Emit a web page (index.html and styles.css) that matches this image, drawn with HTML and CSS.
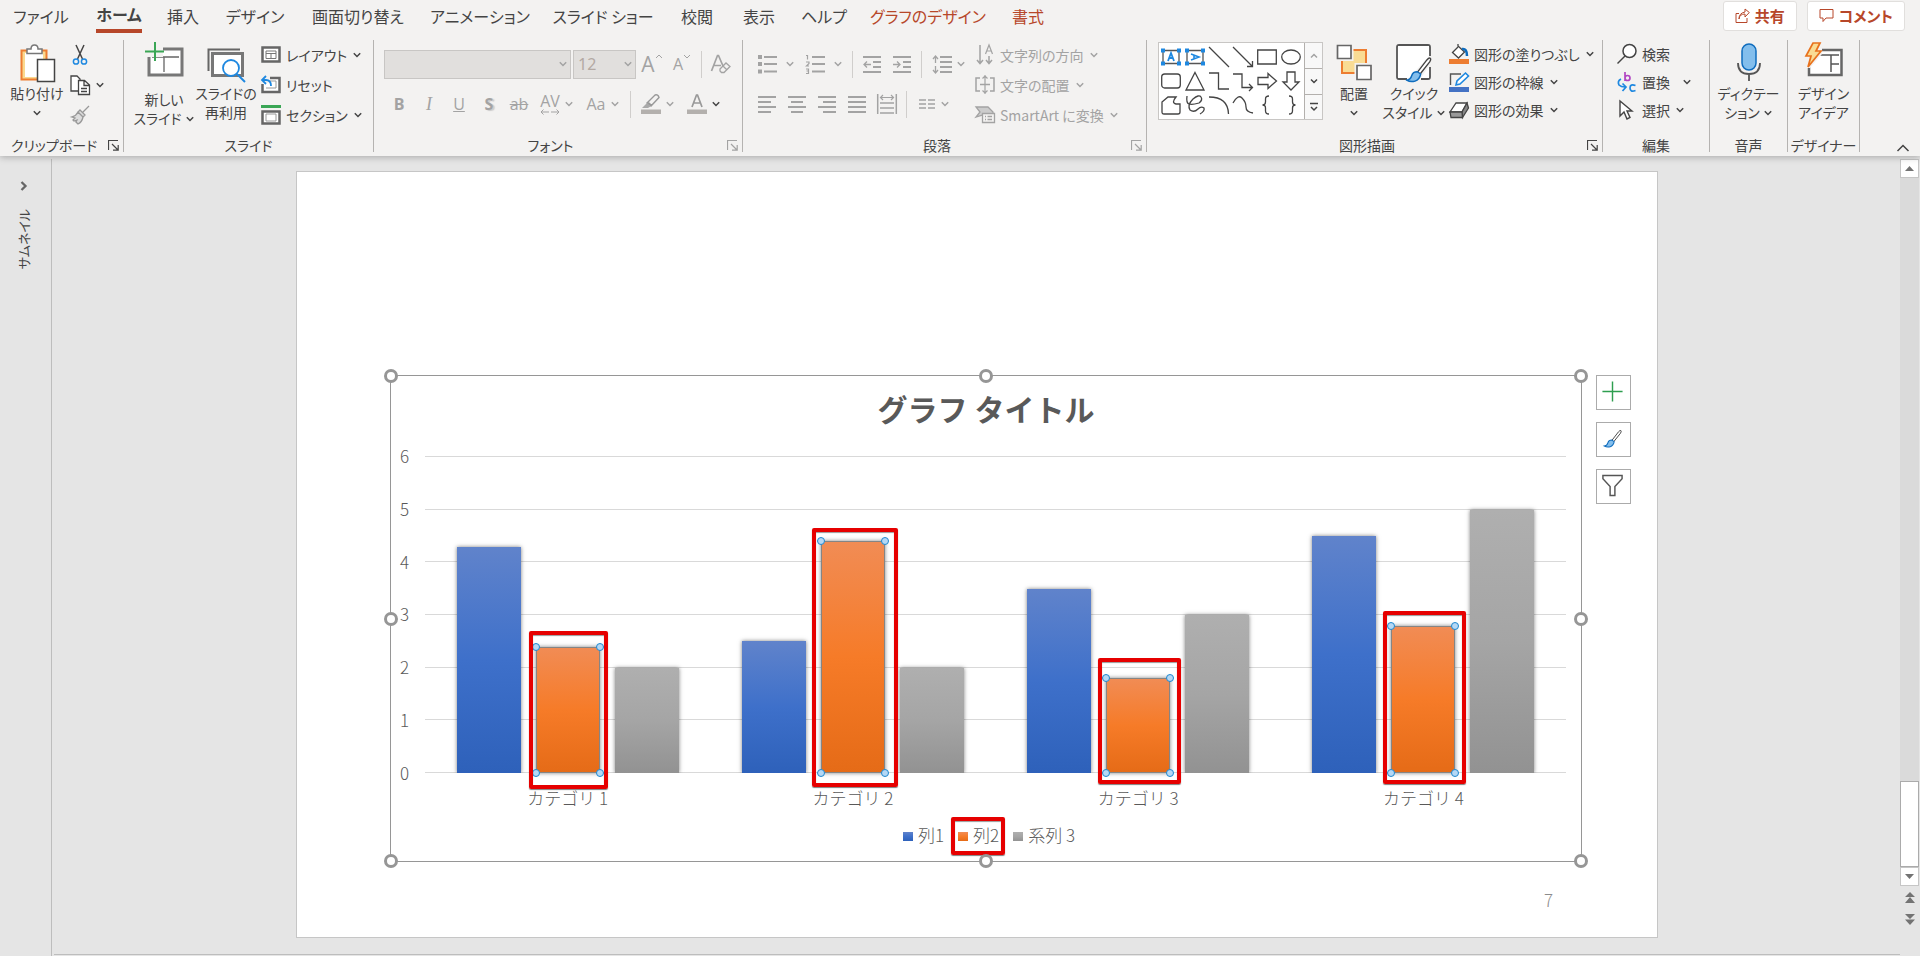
FILE: index.html
```
<!DOCTYPE html>
<html lang="ja">
<head>
<meta charset="utf-8">
<title>プレゼンテーション</title>
<link rel="stylesheet" href="styles.css">
</head>
<body>
<svg class="sprite" aria-hidden="true">
  <symbol id="chev" viewBox="0 0 10 10"><path d="M1.8 3.3 5 6.5 8.2 3.3" fill="none" stroke="currentColor" stroke-width="1.5"/></symbol>
  <symbol id="launch" viewBox="0 0 11 11"><path d="M.5 10V.5H10M4 4l6 6M10.2 5v5.2H5" fill="none" stroke="currentColor" stroke-width="1.2"/></symbol>
  <symbol id="brush" viewBox="0 0 24 24"><path d="M10.5 14.5 19 3.5q2-2.3 3-1.5t-.5 3.300L13 16z" fill="#fff" stroke="#444" stroke-width="1.200"/><path d="M10.500 14q-4 0-5 3.500t-4.500 4q3.500 2 7.500.8t5-6.300z" fill="#83beec" stroke="#0f6cbd" stroke-width="1.300"/></symbol>
</svg>

<header class="ribbon">
  <div class="topbar">
    <nav class="tabs">
      <button>ファイル</button>
      <button class="active"><span>ホーム</span></button>
      <button>挿入</button>
      <button>デザイン</button>
      <button>画面切り替え</button>
      <button>アニメーション</button>
      <button>スライド ショー</button>
      <button>校閲</button>
      <button>表示</button>
      <button>ヘルプ</button>
      <button class="context">グラフのデザイン</button>
      <button class="context">書式</button>
    </nav>
    <div class="actions">
      <button><svg width="15" height="16" viewBox="0 0 15 16" fill="none" stroke="currentColor"><path d="M4 5.500H1v9h11V10M4 11q.5-5 6-5V9l4.300-4.500L10 1v3Q4 5 4 11z"/></svg>共有</button>
      <button><svg width="15" height="16" viewBox="0 0 15 16" fill="none" stroke="currentColor"><path d="M1 1.500h13v8.500H7l-3 3.500V10H1z"/></svg>コメント</button>
    </div>
  </div>

  <div class="groups">
    <section class="group g-clip">
      <div class="body">
        <button class="big">
          <svg class="ic38" viewBox="0 0 38 38"><path d="M3.500 6.500h25v29h-25z" fill="#fad98f" stroke="#ed7d31" stroke-width="2"/><path d="M7 9h18v24H7z" fill="#fff"/><path d="M9 9.500V5h4q0-4 3.500-4T20 5h4v4.500z" fill="#fff" stroke="#777" stroke-width="1.500"/><path d="M19.500 15.500h17v22h-17z" fill="#fff" stroke="#444" stroke-width="1.500"/></svg>
          <span>貼り付け</span><svg class="chev"><use href="#chev"/></svg>
        </button>
        <div class="stack">
          <button class="row" aria-label="切り取り"><svg class="ic20" viewBox="0 0 20 20" fill="none"><path d="M6 0 12.500 14M14 0 7.500 14" stroke="#444" stroke-width="1.500"/><circle cx="6" cy="16.500" r="2.600" stroke="#1e88e0" stroke-width="1.500"/><circle cx="14" cy="16.500" r="2.600" stroke="#1e88e0" stroke-width="1.500"/></svg></button>
          <button class="row" aria-label="コピー"><svg class="ic20" viewBox="0 0 20 20" fill="#fff" stroke="#444" stroke-width="1.300"><path d="M7 16H1V1h6l3 3v12z"/><path d="M8.500 5.500h6l5 4.500v9.500h-11zM14 6v4.500h5M11 13.500h6M11 16.500h6"/></svg><svg class="chev"><use href="#chev"/></svg></button>
          <button class="row" disabled aria-label="書式のコピー"><svg class="ic20" viewBox="0 0 20 20" fill="#ddd" stroke="#999" stroke-width="1.300"><path d="M19 1 13 7M10 5l5 5-2 2-5-5zM8 7l5 5q-1 5-5 7l-2-2 1-2-3 1-1-1 2-2-3-1q4-1 6-5z"/></svg></button>
        </div>
      </div>
      <footer><h2>クリップボード</h2><button aria-label="クリップボードの詳細"><svg><use href="#launch"/></svg></button></footer>
    </section>

    <section class="group g-slide">
      <div class="body">
        <button class="big low w64">
          <svg class="ic38" viewBox="0 0 38 38"><path d="M4 7h33v26H4z" fill="#fff" stroke="#777" stroke-width="3"/><path d="M7 15h27M19 15v15" fill="none" stroke="#666" stroke-width="1.300"/><path d="M0 1h18v14H0z" fill="#f3f2f1"/><path d="M10 0v19M0 9.500h19" stroke="#3aa655" stroke-width="2"/></svg>
          <span>新しい<br>スライド <svg class="chev"><use href="#chev"/></svg></span>
        </button>
        <button class="big w60">
          <svg class="ic38" viewBox="0 0 38 38"><path d="M1.500 27V5.500H33" fill="none" stroke="#666" stroke-width="2"/><path d="M5.500 9.500h30v22h-30z" fill="#fff" stroke="#777" stroke-width="3"/><circle cx="24" cy="24" r="8" fill="#fff" stroke="#1e88e0" stroke-width="1.800"/><path d="m30 30 8 8" stroke="#1e88e0" stroke-width="2"/></svg>
          <span>スライドの<br>再利用</span>
        </button>
        <div class="stack">
          <button class="row"><svg class="ic20" viewBox="0 0 20 20"><path d="M1.500 2.500h17v14h-17z" fill="#fff" stroke="#666" stroke-width="2.500"/><path d="M5 6h10v7.500H5zM5 8.500h10M10 8.500v5" fill="none" stroke="#777"/></svg>レイアウト<svg class="chev"><use href="#chev"/></svg></button>
          <button class="row"><svg class="ic20" viewBox="0 0 20 20"><path d="M3 3h15.500v14H1.500V9" fill="#fff" stroke="#666" stroke-width="2.500"/><path d="M9 6h6v7H5" fill="none" stroke="#999"/><path d="M0 0h9v8H0z" fill="#f3f2f1"/><path d="M5 1 1 5l4 4M1 5h4q5 0 5 6" fill="none" stroke="#1e88e0" stroke-width="1.800"/></svg>リセット</button>
          <button class="row"><svg class="ic20" viewBox="0 0 20 20"><path d="M0 0h20v3H0z" fill="#3aa655"/><path d="M1.500 6.500h17v12h-17z" fill="#fff" stroke="#666" stroke-width="2.500"/><path d="M5 9h10v7H5z" fill="none" stroke="#999"/></svg>セクション<svg class="chev"><use href="#chev"/></svg></button>
        </div>
      </div>
      <footer><h2>スライド</h2></footer>
    </section>

    <section class="group g-font">
      <div class="tools">
        <div class="line">
          <span class="combo name"><select disabled aria-label="フォント"><option></option></select><svg class="chev"><use href="#chev"/></svg></span>
          <span class="combo size"><select disabled aria-label="フォント サイズ"><option>12</option></select><svg class="chev"><use href="#chev"/></svg></span>
          <button class="tool" disabled aria-label="フォント サイズの拡大"><span class="glyph large">A</span><svg class="mini" viewBox="0 0 8 8"><path d="m1 5 3-3 3 3" fill="none" stroke="currentColor"/></svg></button>
          <button class="tool" disabled aria-label="フォント サイズの縮小"><span class="glyph">A</span><svg class="mini" viewBox="0 0 8 8"><path d="m1 2 3 3 3-3" fill="none" stroke="currentColor"/></svg></button>
          <i class="sep"></i>
          <button class="tool" disabled aria-label="書式のクリア"><svg class="ic20" viewBox="0 0 20 20" fill="none" stroke="currentColor" stroke-width="1.300"><path d="M.500 17 6.500 1.500h1L12 12M3 11.500h7" stroke-width="1.700"/><path d="m9 15 6-6 4 3.500-6 6h-2.500L9 17zM12 12l4 4" fill="#f3f2f1"/></svg></button>
        </div>
        <div class="line">
          <button class="tool" disabled><b class="glyph">B</b></button>
          <button class="tool" disabled><i class="glyph serif">I</i></button>
          <button class="tool" disabled><u class="glyph">U</u></button>
          <button class="tool" disabled><b class="glyph shade">S</b></button>
          <button class="tool" disabled><s class="glyph">ab</s></button>
          <button class="tool combo-tool" disabled aria-label="文字の間隔"><span class="glyph av">AV<svg viewBox="0 0 20 6" fill="none" stroke="currentColor"><path d="M1 3h8M11 3h8M3.500.500 1 3l2.500 2.500M16.500.500 19 3l-2.500 2.500"/></svg></span><svg class="chev"><use href="#chev"/></svg></button>
          <button class="tool combo-tool" disabled><span class="glyph">Aa</span><svg class="chev"><use href="#chev"/></svg></button>
          <i class="sep"></i>
          <button class="tool combo-tool" disabled aria-label="蛍光ペンの色"><svg class="ic20" viewBox="0 0 20 20"><path d="M0 15.500h20v4.500H0z" fill="#b3b0ad"/><path d="M6 9 14 1q3-1 4 2.500L10 12zM7 8l4 4" fill="none" stroke="#999" stroke-width="1.400"/><path d="m6 9 3.500 3.500L7 14H1z" fill="#aaa"/></svg><svg class="chev"><use href="#chev"/></svg></button>
          <button class="tool combo-tool" disabled aria-label="フォントの色"><svg class="ic20" viewBox="0 0 20 20"><path d="M0 15.500h20v4.500H0z" fill="#b3b0ad"/><path d="m5 13 4.500-12h1L15 13M6.500 9h7" fill="none" stroke="#999" stroke-width="1.700"/></svg><svg class="chev dark"><use href="#chev"/></svg></button>
        </div>
      </div>
      <footer><h2>フォント</h2><button disabled aria-label="フォントの詳細"><svg><use href="#launch"/></svg></button></footer>
    </section>

    <section class="group g-para">
      <div class="body">
        <div class="tools">
          <div class="line">
            <button class="tool combo-tool wide" disabled aria-label="箇条書き"><svg class="ic20" viewBox="0 0 20 20" stroke="currentColor" stroke-width="1.800"><path d="M7 3h13M7 10h13M7 17.500h13"/><path d="M1 3h4M1 10h4M1 17.500h4" stroke-width="4"/></svg><svg class="chev"><use href="#chev"/></svg></button>
            <button class="tool combo-tool wide" disabled aria-label="段落番号"><svg class="ic20" viewBox="0 0 20 20" stroke="currentColor" fill="none" stroke-width="1.800"><path d="M7 3h13M7 10h13M7 17.500h13"/><path d="M1 1.500h1.500v4M1 8h3v1.500L1.500 12H4M1 15h2.500v4.500H1M1.500 17h2" stroke-width="1.200"/></svg><svg class="chev"><use href="#chev"/></svg></button>
            <i class="sep"></i>
            <button class="tool" disabled aria-label="インデントを減らす"><svg class="ic18" viewBox="0 0 18 18" stroke="currentColor" fill="none" stroke-width="1.800"><path d="M0 2h18M10 7h8M10 12h8M0 17h18"/><path d="M8 9.500H1M4 6.500l-3 3 3 3" stroke-width="1.300"/></svg></button>
            <button class="tool" disabled aria-label="インデントを増やす"><svg class="ic18" viewBox="0 0 18 18" stroke="currentColor" fill="none" stroke-width="1.800"><path d="M0 2h18M10 7h8M10 12h8M0 17h18"/><path d="M0 9.500h7M4 6.500l3 3-3 3" stroke-width="1.300"/></svg></button>
            <i class="sep"></i>
            <button class="tool combo-tool" disabled aria-label="行間"><svg class="ic20" viewBox="0 0 20 20" stroke="currentColor" fill="none" stroke-width="1.800"><path d="M8 3h12M8 8h12M8 13h12M8 18h12"/><path d="M3.500 2v7M3.500 12v7M1 5l2.500-3L6 5M1 16l2.500 3L6 16" stroke-width="1.300"/></svg><svg class="chev"><use href="#chev"/></svg></button>
          </div>
          <div class="line">
            <button class="tool" disabled aria-label="左揃え"><svg class="ic18" viewBox="0 0 18 18" stroke="currentColor" stroke-width="1.800"><path d="M0 2h18M0 7h13M0 12h18M0 17h13"/></svg></button>
            <button class="tool" disabled aria-label="中央揃え"><svg class="ic18" viewBox="0 0 18 18" stroke="currentColor" stroke-width="1.800"><path d="M0 2h18M3 7h12M0 12h18M3 17h12"/></svg></button>
            <button class="tool" disabled aria-label="右揃え"><svg class="ic18" viewBox="0 0 18 18" stroke="currentColor" stroke-width="1.800"><path d="M0 2h18M5 7h13M0 12h18M5 17h13"/></svg></button>
            <button class="tool" disabled aria-label="両端揃え"><svg class="ic18" viewBox="0 0 18 18" stroke="currentColor" stroke-width="1.800"><path d="M0 2h18M0 7h18M0 12h18M0 17h18"/></svg></button>
            <button class="tool" disabled aria-label="均等割り付け"><svg class="ic20" viewBox="0 0 20 20" stroke="currentColor" fill="none" stroke-width="1.500"><path d="M.700 0v20M19.300 0v20M3 9h14M3 14h14M3 19h14"/><path d="M3 3.500h14M6 1 3.500 3.500 6 6M14 1l2.500 2.500L14 6" stroke-width="1.200"/></svg></button>
            <i class="sep"></i>
            <button class="tool combo-tool" disabled aria-label="段の追加または削除"><svg class="ic18" viewBox="0 0 18 18" stroke="currentColor" stroke-width="1.500"><path d="M1 5h7M1 9h7M1 13h7M10 5h7M10 9h7M10 13h7"/></svg><svg class="chev"><use href="#chev"/></svg></button>
          </div>
        </div>
        <div class="stack">
          <button class="row" disabled><svg class="ic20" viewBox="0 0 20 20" fill="none" stroke="currentColor" stroke-width="1.500"><path d="M5 0v18M2 15l3 3.500L8 15M14 11v7M11 15l3 3.500 3-3.500"/><path d="m10.500 9 3.500-9 3.500 9M12 6h4" stroke-width="1.200"/></svg>文字列の方向<svg class="chev"><use href="#chev"/></svg></button>
          <button class="row" disabled><svg class="ic20" viewBox="0 0 20 20" fill="none" stroke="currentColor" stroke-width="1.500"><path d="M5 3H1v13h4M15 3h4v13h-4M5 9.500h10"/><path d="M10 0v19M7.500 3.500 10 1l2.500 2.500M7.500 15.500 10 18l2.500-2.500" stroke-width="1.200"/></svg>文字の配置<svg class="chev"><use href="#chev"/></svg></button>
          <button class="row" disabled><svg class="ic20" viewBox="0 0 20 20" stroke="currentColor" fill="#ccc" stroke-width="1.300"><path d="M1 2h12l5 5v3H8l-7 2 4-5z"/><path d="M7.500 8.500h12v9h-12z" fill="#f3f2f1"/><path d="M10 11.500h1M12.500 11.500H17M10 14.500h1M12.500 14.500H17"/></svg>SmartArt に変換<svg class="chev"><use href="#chev"/></svg></button>
        </div>
      </div>
      <footer><h2>段落</h2><button disabled aria-label="段落の詳細"><svg><use href="#launch"/></svg></button></footer>
    </section>

    <section class="group g-draw">
      <div class="body">
        <div class="gallery">
          <div class="shapes">
            <button aria-label="テキスト ボックス"><svg viewBox="0 0 20 20" fill="none" stroke="#555" stroke-width="1.300"><path d="M2 3.500h16v13H2z"/><path d="m7 14 3-8 3 8M8 11h4" stroke="#1e88e0" stroke-width="1.800"/><path d="M0 3.500h4M16 3.500h4M0 16.500h4M16 16.500h4" stroke="#1e88e0" stroke-width="4"/></svg></button>
            <button aria-label="縦書きテキスト ボックス"><svg viewBox="0 0 20 20" fill="none" stroke="#555" stroke-width="1.300"><path d="M2 3.500h16v13H2z"/><path d="m6 7 8 3-8 3M9 8v4" stroke="#1e88e0" stroke-width="1.600"/><path d="M0 3.500h4M16 3.500h4M0 16.500h4M16 16.500h4" stroke="#1e88e0" stroke-width="4"/></svg></button>
            <button aria-label="線"><svg viewBox="0 0 20 20"><path d="m0 0 20 20"/></svg></button>
            <button aria-label="矢印"><svg viewBox="0 0 20 20"><path d="m0 0 19 19M19.500 14v5.500H14"/></svg></button>
            <button aria-label="四角形"><svg viewBox="0 0 20 20"><path d="M.700 3h18.600v14H.700z"/></svg></button>
            <button aria-label="楕円"><svg viewBox="0 0 20 20"><ellipse cx="10" cy="10" rx="9.300" ry="7"/></svg></button>
            <button aria-label="角丸四角形"><svg viewBox="0 0 20 20"><rect x=".700" y="3" width="18.600" height="14" rx="3"/></svg></button>
            <button aria-label="三角形"><svg viewBox="0 0 20 20"><path d="M10 1.500 19 19H1z"/></svg></button>
            <button aria-label="カギ線コネクタ"><svg viewBox="0 0 20 20"><path d="M0 2h9.500v16H20"/></svg></button>
            <button aria-label="カギ線矢印コネクタ"><svg viewBox="0 0 20 20"><path d="M0 3h9v13.500h10M16 13l3.500 3.500L16 20"/></svg></button>
            <button aria-label="右矢印"><svg viewBox="0 0 20 20"><path d="M1 6.500h10v-4l8.500 7.500-8.500 7.500v-4H1z"/></svg></button>
            <button aria-label="下矢印"><svg viewBox="0 0 20 20"><path d="M6 1h8v10h4L10 19 2 11h4z"/></svg></button>
            <button aria-label="フリーフォーム"><svg viewBox="0 0 20 20"><path d="M1 7 7 2h8q-5 6 0 7h4v8q0 2-2 2H3q-2 0-2-2z"/></svg></button>
            <button aria-label="曲線"><svg viewBox="0 0 20 20"><path d="M2 1q-1 7 2 8t10-1q4-3 2-6T8 4q-6 6-3 11 4 3 8-1 3-3 6-1 1 3-4 6"/></svg></button>
            <button aria-label="円弧"><svg viewBox="0 0 20 20"><path d="M0 2q19 0 19.500 17"/></svg></button>
            <button aria-label="フリーハンド"><svg viewBox="0 0 20 20"><path d="M0 8q5-9 9-5t4 9 7 6"/></svg></button>
            <button aria-label="左中かっこ"><svg viewBox="0 0 20 20"><path d="M12 1Q8.500 1 8.500 4v3q0 3-3 3 3 0 3 3v3q0 3 3.500 3"/></svg></button>
            <button aria-label="右中かっこ"><svg viewBox="0 0 20 20"><path d="M8 1q3.500 0 3.500 3v3q0 3 3 3-3 0-3 3v3q0 3-3.500 3"/></svg></button>
          </div>
          <div class="scroll">
            <button disabled aria-label="上へ"><svg width="10" height="10" viewBox="0 0 10 10"><path d="m2 6.500 3-3 3 3"/></svg></button>
            <button aria-label="下へ"><svg width="10" height="10" viewBox="0 0 10 10"><path d="m2 3.500 3 3 3-3"/></svg></button>
            <button aria-label="その他"><svg width="10" height="10" viewBox="0 0 10 10"><path d="M1 1.500h8M2 5l3 3 3-3"/></svg></button>
          </div>
        </div>
        <button class="big w60">
          <svg class="ic38" viewBox="0 0 38 38"><path d="M7 6h24v23H7z" fill="#f9dc94" stroke="#ed7d31" stroke-width="2"/><path d="M1.500 1h15v14h-15zM21.500 21h15v15h-15z" fill="#fff" stroke="#f3f2f1" stroke-width="4"/><path d="M2.500 1.500h13.500v13H2.500zM22 21.500h14v14H22z" fill="#fff" stroke="#666" stroke-width="1.700"/></svg>
          <span>配置</span><svg class="chev"><use href="#chev"/></svg>
        </button>
        <button class="big w60">
          <svg class="ic38" viewBox="0 0 38 38"><path d="M12 35H4q-2 0-2-2V3q0-2 2-2h29q2 0 2 2v9M35 23v10q0 2-2 2h-7" fill="none" stroke="#555" stroke-width="1.800"/><path d="M3 2h31v10L14 34H3zM34 22v12h-8z" fill="#fff"/><svg x="10" y="12" width="28" height="27" viewBox="0 0 24 24"><use href="#brush"/></svg></svg>
          <span>クイック<br>スタイル <svg class="chev"><use href="#chev"/></svg></span>
        </button>
        <div class="stack tight">
          <button class="row"><svg class="ic20" viewBox="0 0 20 20"><path d="M9 3 3.500 8.500l6 5.500 6-6L9 2V0" fill="#fff" stroke="#444" stroke-width="1.300"/><path d="M13 5q5-1 5 7" stroke="#0f6cbd" stroke-width="2.500" fill="none"/><path d="M0 15h20v5H0z" fill="#ed7d31"/></svg>図形の塗りつぶし<svg class="chev"><use href="#chev"/></svg></button>
          <button class="row"><svg class="ic20" viewBox="0 0 20 20"><path d="M12 2H1.500v11" fill="none" stroke="#555" stroke-width="1.400"/><path d="m7 13 1-4 8.500-8 3 3L11 12z" fill="#fff" stroke="#1e88e0" stroke-width="1.600"/><path d="M0 15h20v5H0z" fill="#4472c4"/></svg>図形の枠線<svg class="chev"><use href="#chev"/></svg></button>
          <button class="row"><svg class="ic20" viewBox="0 0 20 20" stroke="#444" stroke-width="1.300"><path d="m7 3 11 0L13 12H1z" fill="#fff"/><path d="m18 3 1.500 5-6 9.500L13 12z" fill="#888"/><path d="M1 12h12l.500 5.500H2z" fill="#999"/></svg>図形の効果<svg class="chev"><use href="#chev"/></svg></button>
        </div>
      </div>
      <footer><h2>図形描画</h2><button aria-label="図形描画の詳細"><svg><use href="#launch"/></svg></button></footer>
    </section>

    <section class="group g-edit">
      <div class="body">
        <div class="stack tight">
          <button class="row"><svg class="ic20" viewBox="0 0 20 20" fill="#fff" stroke="#444" stroke-width="1.500"><circle cx="12.500" cy="7" r="6.500"/><path d="m8 12-7.500 7.500"/></svg>検索</button>
          <button class="row"><svg class="ic20" viewBox="0 0 20 20" fill="none" stroke-width="1.700"><path d="M8 0v9M8 6q0-2.500 2.500-2.500T13 6t-2.500 2.500T8 6" stroke="#b146c2"/><path d="M18.500 13.500Q13 11.500 13 16t5.500 2.500M4 7Q0 9 2 13q2 2 6 2M5.500 11.500 9 15l-3.500 4" stroke="#1e88e0"/></svg>置換<svg class="chev far"><use href="#chev"/></svg></button>
          <button class="row"><svg class="ic20" viewBox="0 0 20 20" fill="#fff" stroke="#444" stroke-width="1.400"><path d="M3 1v15l4-4 3 7 3-1.500-3-6.500h5z"/></svg>選択<svg class="chev"><use href="#chev"/></svg></button>
        </div>
      </div>
      <footer><h2>編集</h2></footer>
    </section>

    <section class="group g-voice">
      <div class="body">
        <button class="big">
          <svg class="ic38" viewBox="0 0 38 38"><rect x="12" y="0" width="14" height="26" rx="7" fill="#83beec" stroke="#0f6cbd" stroke-width="1.500"/><path d="M8 19q0 11 11 11t11-11M19 30v7" fill="none" stroke="#555" stroke-width="1.800"/></svg>
          <span>ディクテー<br>ション <svg class="chev"><use href="#chev"/></svg></span>
        </button>
      </div>
      <footer><h2>音声</h2></footer>
    </section>

    <section class="group g-idea">
      <div class="body">
        <button class="big">
          <svg class="ic38" viewBox="0 0 38 38"><path d="M4 6h32.500v25H4z" fill="#fff" stroke="#666" stroke-width="2.500"/><path d="M7 11h27M26 11v17M26 20h8" fill="none" stroke="#555" stroke-width="1.500"/><path d="M0-1h17v11L5 24H0z" fill="#f3f2f1"/><path d="M8-1h7l-4 8h5L3 23l3-11H1z" fill="#f9dc94" stroke="#e8711c" stroke-width="1.700"/></svg>
          <span>デザイン<br>アイデア</span>
        </button>
      </div>
      <footer><h2>デザイナー</h2></footer>
    </section>
    <button class="collapse" aria-label="リボンを折りたたむ"><svg width="14" height="10" viewBox="0 0 14 10"><path d="m1.500 8 5.500-5.500L12.500 8" fill="none" stroke="currentColor" stroke-width="1.500"/></svg></button>
  </div>
</header>

<main class="workspace">
  <aside class="rail">
    <button aria-label="サムネイルを展開"><svg width="10" height="12" viewBox="0 0 10 12"><path d="m2.500 2 4 4-4 4" fill="none" stroke="#666" stroke-width="2.300"/></svg></button>
    <span>サムネイル</span>
  </aside>
  <div class="canvas">
    <article class="slide">
      <figure class="chart">
        <h1>グラフ タイトル</h1>
        <div class="plot">
          <div class="axis"><span>6</span><span>5</span><span>4</span><span>3</span><span>2</span><span>1</span><span>0</span></div>
          <div class="area">
            <div class="lines"><i></i><i></i><i></i><i></i><i></i><i></i></div>
            <div class="cats">
              <div class="cat">
                <div class="bar blue" style="height:71.67%"></div>
                <div class="bar orange" style="height:40%"><i class="dot tl"></i><i class="dot tr"></i><i class="dot bl"></i><i class="dot br"></i><i class="mark m1"></i></div>
                <div class="bar gray" style="height:33.33%"></div>
              </div>
              <div class="cat">
                <div class="bar blue" style="height:41.67%"></div>
                <div class="bar orange" style="height:73.33%"><i class="dot tl"></i><i class="dot tr"></i><i class="dot bl"></i><i class="dot br"></i><i class="mark m2"></i></div>
                <div class="bar gray" style="height:33.33%"></div>
              </div>
              <div class="cat">
                <div class="bar blue" style="height:58.33%"></div>
                <div class="bar orange" style="height:30%"><i class="dot tl"></i><i class="dot tr"></i><i class="dot bl"></i><i class="dot br"></i><i class="mark m3"></i></div>
                <div class="bar gray" style="height:50%"></div>
              </div>
              <div class="cat">
                <div class="bar blue" style="height:75%"></div>
                <div class="bar orange" style="height:46.67%"><i class="dot tl"></i><i class="dot tr"></i><i class="dot bl"></i><i class="dot br"></i><i class="mark m4"></i></div>
                <div class="bar gray" style="height:83.33%"></div>
              </div>
            </div>
          </div>
        </div>
        <div class="names"><span>カテゴリ 1</span><span>カテゴリ 2</span><span>カテゴリ 3</span><span>カテゴリ 4</span></div>
        <ul class="legend">
          <li><i class="key blue"></i>列1</li>
          <li class="marked"><i class="key orange"></i>列2<i class="mark m5"></i></li>
          <li><i class="key gray"></i>系列 3</li>
        </ul>
        <i class="handle n w"></i><i class="handle n c"></i><i class="handle n e"></i>
        <i class="handle m w"></i><i class="handle m e"></i>
        <i class="handle s w"></i><i class="handle s c"></i><i class="handle s e"></i>
      </figure>
      <div class="chart-tools">
        <button aria-label="グラフ要素"><svg width="23" height="23" viewBox="0 0 24 24"><path d="M12 1.500v21M1.500 12h21" stroke="#2e9e4f" stroke-width="1.500"/></svg></button>
        <button aria-label="グラフ スタイル"><svg width="22" height="19"><use href="#brush"/></svg></button>
        <button aria-label="グラフ フィルター"><svg width="23" height="23" viewBox="0 0 24 24"><path d="M2 1.500h20v3.500l-7.500 8v9.500h-5V13L2 5z" fill="#fff" stroke="#555" stroke-width="1.500"/></svg></button>
      </div>
      <span class="page-no">7</span>
    </article>
  </div>
  <div class="vscroll">
    <button aria-label="上へスクロール"><svg width="9" height="5" viewBox="0 0 9 5"><path d="M4.500 0 9 5H0z"/></svg></button>
    <div class="track"><div class="thumb"></div></div>
    <button aria-label="下へスクロール"><svg width="9" height="5" viewBox="0 0 9 5"><path d="M0 0h9L4.500 5z"/></svg></button>
    <button class="jump" aria-label="前のスライド"><svg width="10" height="11" viewBox="0 0 10 11"><path d="m5 0 5 5H0zM5 5l5 6H0z"/></svg></button>
    <button class="jump" aria-label="次のスライド"><svg width="10" height="11" viewBox="0 0 10 11"><path d="M0 0h10L5 5zM0 5.500h10L5 11z"/></svg></button>
  </div>
</main>
</body>
</html>
```
FILE: styles.css
```
* { box-sizing: border-box; }
body {
  margin: 0;
  min-height: 100vh;
  display: flex;
  flex-direction: column;
  background: #e5e5e5;
  color: #444;
  font: 14px/18px "Noto Sans CJK JP", "Noto Sans", sans-serif;
}
button {
  margin: 0;
  padding: 0;
  border: 0;
  background: none;
  color: inherit;
  font: inherit;
  font-feature-settings: "palt";
  white-space: nowrap;
}
button:disabled { color: #a3a3a3; }
h1, h2, ul, figure { margin: 0; padding: 0; }
svg { display: block; flex: none; overflow: visible; }
.sprite { position: absolute; width: 0; height: 0; }
.chev { width: 10px; height: 10px; }
.chev.far { margin-left: 7px; }
.chev.dark { color: #444; }
.ic18 { width: 18px; height: 18px; }
.ic20 { width: 20px; height: 20px; }
.ic38 { width: 38px; height: 38px; }

/* Ribbon */
.ribbon {
  position: relative;
  z-index: 1;
  background: #f3f2f1;
  padding-bottom: 4px;
  box-shadow: 0 1px 7px rgba(0, 0, 0, .28);
}
.topbar { display: flex; justify-content: space-between; height: 40px; }
.tabs {
  display: grid;
  grid-template-columns: 78px 78px 50px 94px 112px 132px 114px 74px 50px 80px 128px 72px;
  padding-left: 2px;
  height: 33px;
  font-size: 16px;
}
.tabs button { padding-bottom: 2px; }
.tabs .active { font-weight: 700; padding: 0; }
.tabs .active span { display: inline-block; line-height: 28px; padding-bottom: 1px; border-bottom: 4px solid #b7472a; }
.tabs .context { color: #b7472a; }
.actions { display: flex; gap: 10px; padding: 1px 15px 0 0; }
.actions button {
  display: flex;
  align-items: center;
  gap: 5px;
  height: 30px;
  padding: 0 11px;
  border: 1px solid #e1dfdd;
  border-radius: 3px;
  background: #fff;
  color: #b7472a;
  font-size: 15px;
  font-weight: 700;
}
.groups { display: flex; height: 112px; }
.group {
  flex: none;
  display: flex;
  flex-direction: column;
  justify-content: space-between;
  border-right: 1px solid #b5b3b1;
}
.g-clip { width: 124px; }
.g-slide { width: 250px; }
.g-font { width: 369px; }
.g-para { width: 404px; }
.g-draw { width: 456px; }
.g-edit { width: 107px; }
.g-voice { width: 78px; }
.g-idea { width: 72px; }
.group footer { display: flex; align-items: center; height: 20px; margin-bottom: -3px; }
.group h2 { flex: 1; text-align: center; font-size: 14px; font-weight: 400; font-feature-settings: "palt"; white-space: nowrap; }
.group footer button { margin-right: 4px; }
.group footer svg { width: 11px; height: 11px; }
.body { display: flex; }
.g-clip .body, .g-slide .body { padding-left: 8px; }
.big {
  display: flex;
  flex-direction: column;
  align-items: center;
  width: 58px;
  padding-top: 4px;
  line-height: 19px;
}
.big > span { margin-top: 2px; }
.big > .chev { margin-top: 5px; }
.big span .chev { display: inline-block; }
.big.low { padding-top: 2px; }
.big.low > span { margin-top: 10px; }
.w60 { width: 60px; }
.w64 { width: 64px; }
.g-voice .body, .g-idea .body { justify-content: center; }
.stack { display: flex; flex-direction: column; padding-left: 5px; }
.g-clip .stack { padding-left: 4px; }
.row { display: flex; align-items: center; gap: 5px; height: 30px; }
.tight .row { height: 28px; }

.tools { padding: 9px 0 0 10px; display: grid; gap: 10px; align-content: start; }
.g-para .tools { padding-left: 9px; width: 227px; }
.line { display: flex; align-items: center; height: 30px; }
.combo { display: flex; align-items: center; margin-right: 2px; height: 29px; border: 1px solid #c8c6c4; background: #e1dfdd; color: #a3a3a3; padding-right: 2px; }
.combo select {
  flex: 1;
  min-width: 0;
  appearance: none;
  border: 0;
  background: none;
  padding: 0 4px;
  color: #b3a9a3;
  opacity: 1;
  font: 16px/20px "Noto Sans", sans-serif;
}
.combo.name { width: 187px; }
.combo.size { width: 63px; margin-right: 1px; }
.tool { display: flex; align-items: center; justify-content: center; width: 30px; height: 30px; }
.combo-tool { width: 46px; gap: 4px; }
.combo-tool.wide { width: 48px; gap: 8px; }
.sep { width: 1px; height: 27px; margin: 0 4px; background: #d0cecc; }
.glyph { font-family: "Open Sans", "Noto Sans", sans-serif; font-size: 16px; line-height: 20px; }
.glyph.large { font-size: 21px; }
.glyph.serif { font-family: "Liberation Serif", serif; font-size: 18px; }
.glyph.shade { text-shadow: 2px 1px 1px #ccc; }
.glyph.av { line-height: 15px; }
.glyph.av svg { width: 20px; height: 6px; }
.mini { width: 8px; height: 8px; align-self: flex-start; margin-top: 4px; }

.gallery { display: flex; width: 165px; height: 78px; margin: 2px 1px 0 11px; border: 1px solid #c8c6c4; background: #fff; }
.shapes { flex: 1; display: grid; grid-template-columns: repeat(6, 24px); grid-template-rows: repeat(3, 24px); padding: 2px 0 0; }
.shapes button { display: grid; place-items: center; }
.shapes svg { width: 20px; height: 20px; }
.g-draw .shapes svg:not([fill]) { fill: none; stroke: #444; stroke-width: 1.3; }
.scroll { display: grid; grid-template-rows: 1fr 1fr 1fr; width: 18px; }
.scroll button { display: grid; place-items: center; border-left: 1px solid #b3b0ad; background: #f8f8f8; }
.scroll button + button { border-top: 1px solid #b3b0ad; }
.scroll path { fill: none; stroke: currentColor; stroke-width: 1.5; }
.g-edit .stack { padding-left: 14px; }
.collapse { margin: auto 10px -1px auto; }

/* Workspace */
.workspace { flex: 1; display: flex; }
.rail {
  display: flex;
  flex-direction: column;
  align-items: center;
  gap: 17px;
  width: 52px;
  margin-top: 3px;
  padding: 21px 4px 0 0;
  border-right: 1px solid #bdbdbd;
}
.rail span { writing-mode: vertical-rl; text-orientation: sideways; transform: rotate(180deg); font-feature-settings: "palt"; font-size: 13px; }
.canvas {
  flex: 1;
  display: flex;
  margin: 0 0 1px 2px;
  padding: 15px 242px 16px;
  border-bottom: 1px solid #bdbdbd;
}
.slide { position: relative; flex: 1; background: #fff; border: 1px solid #c6c6c6; }
.chart {
  position: absolute;
  inset: 203px 75px 75px 93px;
  display: flex;
  flex-direction: column;
  border: 1px solid #969696;
  color: #595959;
  font-size: 17px;
  font-weight: 300;
  line-height: 24px;
}
.chart h1 { margin: 14px 0 30px; text-align: center; font-size: 30px; line-height: 36px; font-weight: 700; }
.plot { flex: 1; display: flex; padding-right: 15px; }
.axis { display: flex; flex-direction: column; justify-content: space-between; width: 34px; margin: -12px 0; padding-right: 16px; text-align: right; }
.area { flex: 1; display: grid; }
.lines, .cats { grid-area: 1 / 1; display: grid; }
.lines i { border-top: 1px solid #d9d9d9; }
.lines { border-bottom: 1px solid #d9d9d9; }
.cats { grid-template-columns: repeat(4, 1fr); padding-top: 1px; }
.cat { display: flex; align-items: flex-end; justify-content: center; gap: 15px; }
.bar { position: relative; width: 64px; box-shadow: 0 0 4px rgba(0, 0, 0, .5); clip-path: inset(-8px -8px 0); }
.bar.orange { z-index: 1; clip-path: none; outline: 1px solid #858585; outline-offset: -1px; }
.blue { background: linear-gradient(#6083cb, #3e70ca 50%, #2e61ba); }
.orange { background: linear-gradient(#f18c55, #f67b28 50%, #e56b17); }
.gray { background: linear-gradient(#afafaf, #a5a5a5 50%, #929292); }
.dot { position: absolute; width: 8px; height: 8px; border: 1px solid #1e88d0; border-radius: 50%; background: #b5d8f5; }
.dot.tl { top: -4px; left: -4px; }
.dot.tr { top: -4px; right: -4px; }
.dot.bl { bottom: -4px; left: -4px; }
.dot.br { bottom: -4px; right: -4px; }
.mark { position: absolute; border: 4px solid #e60000; border-radius: 2px; box-shadow: 0 1px 1px rgba(0, 0, 0, .5), inset 0 1px 1px rgba(0, 0, 0, .4); }
.m1 { inset: -16px -8px -16px -7px; }
.m2 { inset: -13px -13px -14px -9px; }
.m3 { inset: -20px -11px -11px -8px; }
.m4 { inset: -15px -11px -11px -8px; }
.m5 { inset: -6px -6px -8px -7px; }
.names { display: grid; grid-template-columns: repeat(4, 1fr); margin: 13px 15px 13px 34px; text-align: center; }
.legend { display: flex; justify-content: center; gap: 14px; margin-bottom: 14px; padding-left: 6px; list-style: none; }
.legend li { position: relative; display: flex; align-items: center; gap: 5px; }
.key { width: 10px; height: 9px; margin-top: 3px; }
.handle { position: absolute; width: 14px; height: 14px; border: 3px solid #969696; border-radius: 50%; background: #fff; }
.handle.n { top: -7px; }
.handle.m { top: calc(50% - 7px); }
.handle.s { bottom: -7px; }
.handle.w { left: -7px; }
.handle.c { left: calc(50% - 7px); }
.handle.e { right: -7px; }
.chart-tools { position: absolute; top: 203px; right: 26px; display: grid; gap: 12px; }
.chart-tools button { display: grid; place-items: center; width: 35px; height: 35px; border: 1px solid #ababab; background: #fff; padding: 0 2px 2px 0; }
.page-no { position: absolute; right: 104px; bottom: 25px; color: #8b8b8b; font-size: 17px; font-weight: 300; line-height: 24px; }

.vscroll { display: flex; flex-direction: column; width: 20px; padding: 3px 1px 31px 0; }
.vscroll svg { fill: #737373; }
.vscroll button { display: grid; place-items: center; height: 19px; border: 1px solid #c6c6c6; background: #fff; }
.vscroll .jump { height: 11px; margin-top: 6px; border: 0; background: none; }
.vscroll .jump + .jump { margin-top: 11px; }
.track { flex: 1; display: flex; flex-direction: column; justify-content: flex-end; background: #dadada; }
.thumb { height: 86px; border: 1px solid #ababab; background: #fff; }
```
